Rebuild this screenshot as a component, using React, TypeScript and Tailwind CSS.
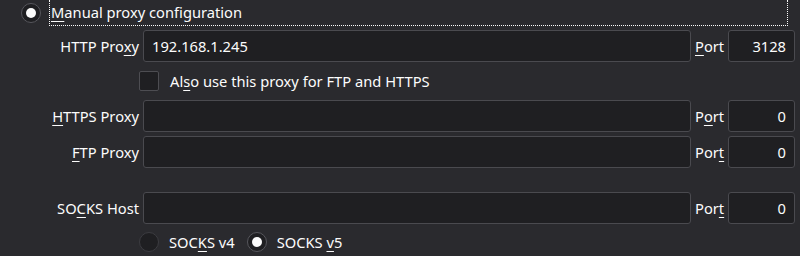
import type { ReactNode } from "react";

function Mn({ children }: { children: ReactNode }) {
  return <span className="underline decoration-1 underline-offset-[3px]">{children}</span>;
}

function Radio({ checked }: { checked?: boolean }) {
  return (
    <span
      className={
        "flex h-5 w-5 shrink-0 items-center justify-center rounded-full border " +
        (checked ? "border-[#56565c] bg-[#1f1f22]" : "border-[#3c3c41] bg-[#1f1f22]")
      }
    >
      {checked && <span className="h-[10px] w-[10px] rounded-full bg-[#fcfcfc]" />}
    </span>
  );
}

function Field({ value, right }: { value?: string; right?: boolean }) {
  return (
    <div
      className={
        "flex h-8 items-center rounded-[3px] border border-[#4a4a4f] bg-[#1f1f22] " +
        (right ? "justify-end pr-[8px]" : "pl-[8px]")
      }
    >
      {value}
    </div>
  );
}

function ProxyRow({ label, port, portLabel, host }: { label: ReactNode; port: string; portLabel: ReactNode; host?: string }) {
  return (
    <div className="grid grid-cols-[139px_548px_29px_67px] items-center gap-x-1">
      <div className="whitespace-nowrap text-right">{label}</div>
      <Field value={host} />
      <div className="whitespace-nowrap">{portLabel}</div>
      <Field value={port} right />
    </div>
  );
}

export default function App() {
  return (
    <div className="h-[256px] w-[800px] overflow-hidden bg-[#2a2a2e] text-[14.7px] leading-none text-[#fcfcfc] [font-family:'Noto_Sans',sans-serif]">
      {/* Manual proxy radio with focus frame */}
      <div className="flex h-[26px] items-center pl-[21px]">
        <Radio checked />
        <div className="ml-2 flex h-[26px] w-[739px] items-center border-x border-b border-dotted border-[#fcfcfc] pl-px">
          <span>
            <Mn>M</Mn>anual proxy configuration
          </span>
        </div>
      </div>

      <div className="mt-1 flex flex-col gap-1">
        <ProxyRow
          label={
            <>
              HTTP Pro<Mn>x</Mn>y
            </>
          }
          host="192.168.1.245"
          portLabel={
            <>
              <Mn>P</Mn>ort
            </>
          }
          port="3128"
        />

        <div className="flex h-[30px] items-center pl-[139px]">
          <span className="h-5 w-5 rounded-[2px] border border-[#4d4d52] bg-[#1f1f22]" />
          <span className="ml-[11px]">
            Al<Mn>s</Mn>o use this proxy for FTP and HTTPS
          </span>
        </div>

        <ProxyRow
          label={
            <>
              <Mn>H</Mn>TTPS Proxy
            </>
          }
          portLabel={
            <>
              P<Mn>o</Mn>rt
            </>
          }
          port="0"
        />
        <ProxyRow
          label={
            <>
              <Mn>F</Mn>TP Proxy
            </>
          }
          portLabel={
            <>
              Por<Mn>t</Mn>
            </>
          }
          port="0"
        />

        <div className="h-4" />

        <ProxyRow
          label={
            <>
              SO<Mn>C</Mn>KS Host
            </>
          }
          portLabel={
            <>
              Por<Mn>t</Mn>
            </>
          }
          port="0"
        />

        <div className="flex h-7 items-center pl-[139px]">
          <Radio />
          <span className="ml-[10px]">
            SOC<Mn>K</Mn>S v4
          </span>
          <span className="ml-3">
            <Radio checked />
          </span>
          <span className="ml-[10px]">
            SOCKS <Mn>v</Mn>5
          </span>
        </div>
      </div>
    </div>
  );
}
